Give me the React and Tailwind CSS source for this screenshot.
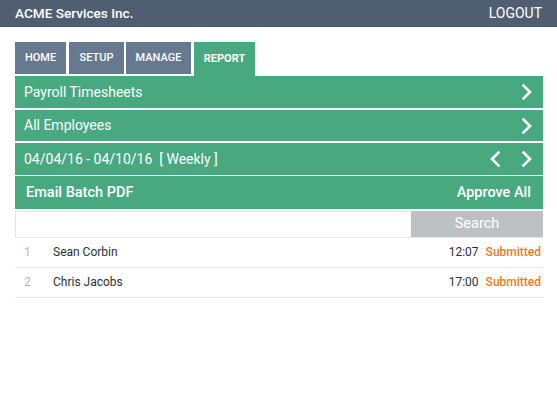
import React from 'react';

const Chevron = ({ left }) => (
  <svg width="12" height="18" viewBox="0 0 12 18" fill="none" stroke="white" strokeWidth="2.6" strokeLinecap="square">
    <path d={left ? 'M9.5 2.5 L3 9 L9.5 15.5' : 'M2.5 2.5 L9 9 L2.5 15.5'} />
  </svg>
);

const rows = [
  { id: 1, name: 'Sean Corbin', time: '12:07' },
  { id: 2, name: 'Chris Jacobs', time: '17:00' },
];

const App = () => {
  return (
    <div className="w-[557px] h-[412px] bg-white overflow-hidden font-['Roboto',sans-serif]">
      {/* Header */}
      <div className="h-[27px] bg-[#4f5f71] border-b border-[#46566a] flex items-center justify-between pl-[15px] pr-[15px] text-white">
        <span className="text-[13.6px] font-medium">ACME Services Inc.</span>
        <span className="text-[14px]">LOGOUT</span>
      </div>

      <div className="w-[528px] ml-[15px] mt-[15px]">
        {/* Tabs */}
        <div className="flex h-[34px] text-white text-[11px]">
          <div className="h-[32px] w-[51px] mr-[3px] bg-[#67798f] font-medium flex items-center justify-center">HOME</div>
          <div className="h-[32px] w-[55px] mr-[2px] bg-[#67798f] font-medium flex items-center justify-center">SETUP</div>
          <div className="h-[32px] w-[65px] mr-[3px] bg-[#67798f] font-medium flex items-center justify-center">MANAGE</div>
          <div className="h-[34px] w-[61px] bg-[#48a880] font-bold flex items-center justify-center">REPORT</div>
        </div>

        {/* Green rows */}
        <div className="h-[32px] mb-[2px] bg-[#48a880] text-white text-[14px] flex items-center justify-between pl-[9px] pr-[10px]">
          <span>Payroll Timesheets</span>
          <Chevron />
        </div>
        <div className="h-[31px] mb-[2px] bg-[#48a880] text-white text-[14px] flex items-center justify-between pl-[9px] pr-[10px]">
          <span>All Employees</span>
          <Chevron />
        </div>
        <div className="h-[32px] mb-[1px] bg-[#48a880] text-white text-[14px] flex items-center justify-between pl-[9px] pr-[10px]">
          <span>04/04/16 - 04/10/16&nbsp; [ Weekly ]</span>
          <div className="flex items-center gap-[20px]">
            <Chevron left />
            <Chevron />
          </div>
        </div>
        <div className="h-[33px] bg-[#48a880] text-white text-[14.5px] font-medium flex items-center justify-between pl-[11px] pr-[12px]">
          <span>Email Batch PDF</span>
          <span>Approve All</span>
        </div>

        {/* Search */}
        <div className="flex h-[27px] mt-[2px] border-b border-[#e6e6e6]">
          <div className="flex-1 border-l border-t border-[#e6e6e6]" />
          <div className="w-[132px] bg-[#bdc1c4] text-white text-[14.5px] flex items-center justify-center">Search</div>
        </div>

        {/* Employee rows */}
        {rows.map(row => (
          <div key={row.id} className="h-[30px] border-b border-[#e6e6e6] flex items-center text-[12px] pb-[1px]">
            <span className="w-[38px] pl-[9px] text-[#b4b4b4]">{row.id}</span>
            <span className="flex-1 text-[#2b2f33]">{row.name}</span>
            <span className="text-[#2b2f33]">{row.time}</span>
            <span className="ml-[7px] mr-[2px] text-[#f07a1a] font-medium">Submitted</span>
          </div>
        ))}
      </div>
    </div>
  );
};

export default App;
